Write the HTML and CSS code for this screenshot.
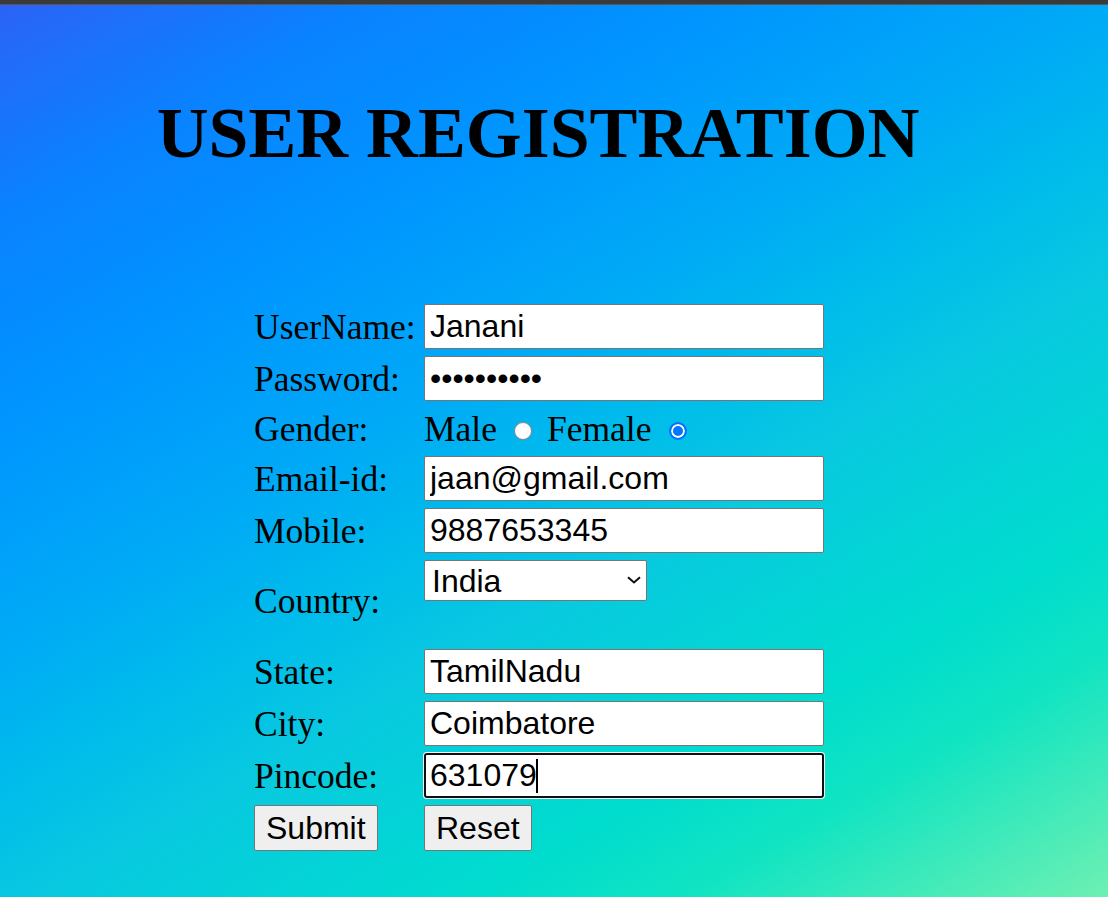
FILE: index.html
```html
<!DOCTYPE html>
<html lang="en">
<head>
<meta charset="utf-8">
<title>User Registration</title>
<link rel="stylesheet" href="styles.css">
</head>
<body>
<div class="topbar"></div>
<h1 class="title">USER REGISTRATION</h1>
<form class="reg-form" onsubmit="return false">
  <label class="lbl" for="uname">UserName:</label>
  <input class="field" id="uname" type="text" value="Janani">

  <label class="lbl" for="pwd">Password:</label>
  <input class="field" id="pwd" type="password" value="janani1234">

  <span class="lbl">Gender:</span>
  <div class="gender">
    <span>Male</span>
    <input class="radio" type="radio" name="gender" value="male">
    <span>Female</span>
    <input class="radio" type="radio" name="gender" value="female" checked>
  </div>

  <label class="lbl" for="email">Email-id:</label>
  <input class="field" id="email" type="text" value="jaan@gmail.com">

  <label class="lbl" for="mobile">Mobile:</label>
  <input class="field" id="mobile" type="text" value="9887653345">

  <label class="lbl country-lbl" for="country">Country:</label>
  <div class="country-cell">
    <div class="select-wrap">
      <select class="select" id="country">
        <option selected>India</option>
        <option>USA</option>
        <option>UK</option>
      </select>
      <svg class="chevron" width="14" height="8" viewBox="0 0 14 8" aria-hidden="true">
        <path d="M1 1.2 L7 6.5 L13 1.2" fill="none" stroke="#111" stroke-width="2"/>
      </svg>
    </div>
  </div>

  <label class="lbl" for="state">State:</label>
  <input class="field" id="state" type="text" value="TamilNadu">

  <label class="lbl" for="city">City:</label>
  <input class="field" id="city" type="text" value="Coimbatore">

  <label class="lbl" for="pin">Pincode:</label>
  <span class="focus-wrap">
    <input class="field focused" id="pin" type="text" value="631079">
    <span class="caret"></span>
  </span>

  <div class="btn-cell"><button class="btn" type="submit">Submit</button></div>
  <div class="btn-cell"><button class="btn" type="reset">Reset</button></div>
</form>
</body>
</html>
```
FILE: styles.css
```css
html {
  height: 100%;
  background: linear-gradient(150deg,
    #2c62f5 0%,
    #0a82ff 14%,
    #0094ff 27%,
    #00aaf6 42%,
    #00bdea 52%,
    #08c9e0 60%,
    #00dcce 76%,
    #10e4c2 84%,
    #6ef0b2 100%);
}

body {
  margin: 0;
  font-family: "Liberation Serif", "Times New Roman", serif;
  color: #000;
}

.topbar {
  height: 4px;
  background: #3a3a3a;
  border-bottom: 1px solid #5a5656;
}

.title {
  width: 1076px;
  margin: 88px 0 0 0;
  text-align: center;
  font-family: "Liberation Serif", "Times New Roman", serif;
  font-weight: bold;
  font-size: 71.8px;
  line-height: 80px;
}

.reg-form {
  margin: 131px 0 0 254px;
  display: grid;
  grid-template-columns: 170px 400px;
  grid-template-rows: 45px 45px 41px 45px 45px 82px 45px 45px 45px 46px;
  row-gap: 7px;
}

.lbl {
  align-self: center;
  font-size: 35.5px;
  line-height: 40px;
  white-space: nowrap;
}

.field {
  box-sizing: border-box;
  width: 400px;
  height: 45px;
  margin: 0;
  padding: 0 5px;
  border: 1px solid #767676;
  border-radius: 2px;
  background: #fff;
  font-family: "Liberation Sans", Arial, sans-serif;
  font-size: 32px;
  color: #000;
  outline: none;
}

.gender {
  display: flex;
  align-items: center;
  font-size: 35.5px;
  line-height: 40px;
  white-space: nowrap;
}

.radio {
  -webkit-appearance: none;
  appearance: none;
  box-sizing: border-box;
  width: 18px;
  height: 18px;
  margin: 4px 15px 0 17px;
  border: 1px solid #858585;
  border-radius: 50%;
  background: #fff;
}

.radio:checked {
  margin-left: 18px;
  border: 2px solid #0075ff;
  background: #0075ff;
  box-shadow: inset 0 0 0 2px #fff;
}

.country-cell {
  align-self: start;
}

.select-wrap {
  position: relative;
  width: 223px;
  height: 41px;
}

.select {
  -webkit-appearance: none;
  appearance: none;
  box-sizing: border-box;
  width: 223px;
  height: 41px;
  margin: 0;
  padding: 0 30px 0 7px;
  border: 1px solid #767676;
  border-radius: 2px;
  background: #fff;
  font-family: "Liberation Sans", Arial, sans-serif;
  font-size: 32px;
  color: #000;
}

.chevron {
  position: absolute;
  right: 6px;
  top: 16px;
  pointer-events: none;
}

.focus-wrap {
  position: relative;
  display: block;
  width: 400px;
  height: 45px;
}

.focused {
  border: 2px solid #101010;
  border-radius: 3px;
  padding: 0 4px;
  box-shadow: 0 0 0 1px #fff;
}

.caret {
  position: absolute;
  left: 112px;
  top: 6px;
  width: 2px;
  height: 34px;
  background: #000;
}

.btn-cell {
  display: flex;
  align-items: stretch;
}

.btn {
  box-sizing: border-box;
  height: 46px;
  margin: 0;
  padding: 0 11px;
  border: 1px solid #767676;
  border-radius: 2px;
  background: #efefef;
  font-family: "Liberation Sans", Arial, sans-serif;
  font-size: 32px;
  color: #000;
}
```
